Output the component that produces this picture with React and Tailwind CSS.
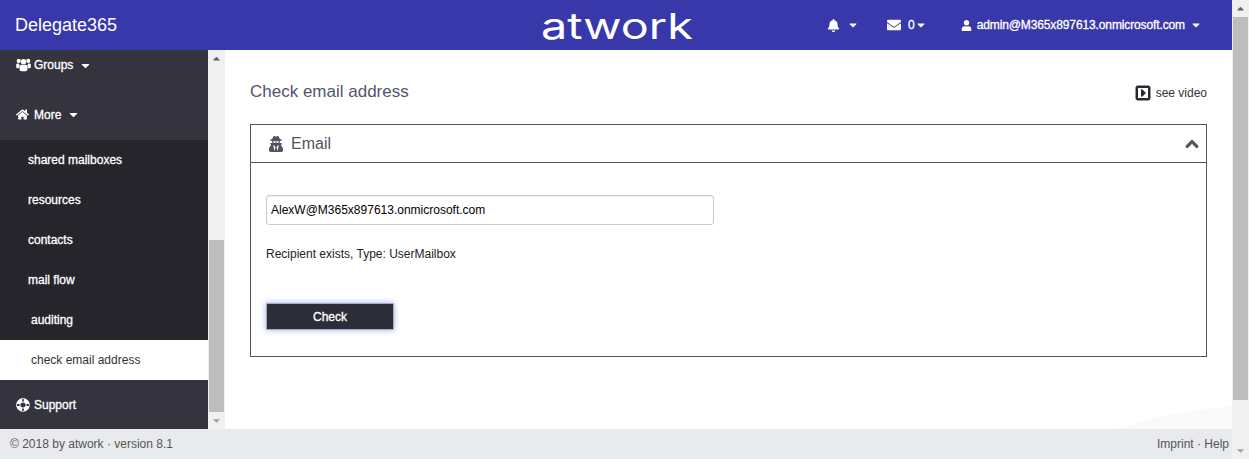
import React from 'react';
import {
  FaHome, FaLifeRing, FaBell, FaEnvelope, FaUser, FaCaretDown, FaCaretUp,
  FaChevronUp, FaUserSecret, FaRegCaretSquareRight,
} from 'react-icons/fa';

const FONT = "font-['Liberation_Sans',Arial,sans-serif]";
const SEMI = '[-webkit-text-stroke:0.3px_white]';

const SUB_ITEMS = [
  { label: 'shared mailboxes', pad: 'pl-7' },
  { label: 'resources', pad: 'pl-7' },
  { label: 'contacts', pad: 'pl-7' },
  { label: 'mail flow', pad: 'pl-7' },
  { label: 'auditing', pad: 'pl-[31px]' },
];

// three person icon, the package's own one is too thin at this size
function UsersIcon() {
  return (
    <svg viewBox="0 0 16 14" className="w-[15px] h-[14px] fill-white">
      <circle cx="8" cy="3.4" r="2.9" />
      <circle cx="2.9" cy="2.6" r="2.2" />
      <circle cx="13.1" cy="2.6" r="2.2" />
      <rect x="3.8" y="6.6" width="8.4" height="7" rx="2" />
      <rect x="0.2" y="5.4" width="3.4" height="5" rx="1.4" />
      <rect x="12.4" y="5.4" width="3.4" height="5" rx="1.4" />
    </svg>
  );
}

function Scrollbar({ thumbClass, thumbGrow }) {
  return (
    <div className="w-[17px] shrink-0 bg-[#f0f0f0] flex flex-col items-center">
      <div className="h-[17px] flex items-center justify-center text-[#606060] text-[11px]">
        <FaCaretUp />
      </div>
      <div className={`w-full flex-1 flex flex-col ${thumbClass}`}>
        <div className={`mx-[1px] bg-[#bdbdbd] ${thumbGrow}`} />
      </div>
      <div className="h-[17px] flex items-center justify-center text-[#a0a0a0] text-[11px]">
        <FaCaretDown />
      </div>
    </div>
  );
}

function NavHead({ icon, label, caret, className }) {
  return (
    <div className={`flex items-center pl-4 text-white text-xs ${SEMI} ${className}`}>
      <span className="w-[18px] text-[14px] flex">{icon}</span>
      <span>{label}</span>
      {caret && <FaCaretDown className="ml-[6px] text-[13px]" />}
    </div>
  );
}

export default function App() {
  return (
    <div className={`flex h-[459px] w-[1249px] overflow-hidden ${FONT}`}>
      <div className="flex-1 flex flex-col min-w-0">
        <header className="h-[50px] shrink-0 bg-[#3838ab] text-white flex items-center relative">
          <div className="pl-[15px] text-lg">Delegate365</div>
          <div className="absolute left-[541px] top-[4px] origin-left scale-x-[1.3] font-['Inter',sans-serif] font-normal text-[36px] leading-[44px]">atwork</div>
          <div className={`ml-auto flex items-center text-xs ${SEMI}`}>
            <FaBell className="text-[13px]" />
            <FaCaretDown className="ml-[7px] text-[12px]" />
            <FaEnvelope className="ml-[28px] text-[14px]" />
            <span className="ml-[7px]">0</span>
            <FaCaretDown className="text-[12px]" />
            <FaUser className="ml-[34px] text-[11px]" />
            <span className="ml-[5px] tracking-[-0.12px]">admin@M365x897613.onmicrosoft.com</span>
            <FaCaretDown className="ml-[5px] mr-[30px] text-[12px]" />
          </div>
        </header>

        <div className="flex-1 flex min-h-0">
          <aside className="w-[208px] shrink-0 bg-[#35343e] flex flex-col">
            <NavHead icon={<UsersIcon />} label="Groups" caret className="h-[30px]" />
            <NavHead icon={<FaHome className="text-[13px]" />} label="More" caret className="h-[60px] pt-[9px]" />
            <div className="bg-[#26252c]">
              {SUB_ITEMS.map(item => (
                <div key={item.label} className={`h-10 flex items-center text-white text-xs ${SEMI} ${item.pad}`}>
                  {item.label}
                </div>
              ))}
              <div className="h-10 flex items-center bg-white text-[#333] text-xs pl-[31px]">check email address</div>
            </div>
            <NavHead icon={<FaLifeRing className="rotate-45" />} label="Support" className="flex-1" />
          </aside>
          <Scrollbar thumbClass="justify-end" thumbGrow="h-[172px]" />

          <main className="flex-1 bg-white pl-[25px] pr-[25px] pt-[32px] relative overflow-hidden">
            {/* faint swoosh in the corner */}
            <div className="absolute top-[356px] right-[-228px] w-[400px] h-[154px] rounded-[50%] bg-[#fafafb]" />
            <div className="relative flex justify-between h-[42px]">
              <h1 className="text-[17px] leading-5 text-[#54536b]">Check email address</h1>
              <div className="flex items-center self-start mt-[3px] text-xs text-[#333]">
                <FaRegCaretSquareRight className="text-[16px] text-[#26252c] mr-[5px] stroke-current stroke-[30]" />
                see video
              </div>
            </div>
            <section className="relative border border-[#54535f] h-[233px]">
              <div className="h-[38px] border-b border-[#54535f] flex items-center pl-[17px] pr-[7px] text-[#54535f]">
                <FaUserSecret className="text-[16px]" />
                <span className="ml-[7px] text-base">Email</span>
                <FaChevronUp className="ml-auto text-[14px] stroke-current stroke-[40]" />
              </div>
              <div className="px-[15px] pt-8">
                <input
                  readOnly
                  value="AlexW@M365x897613.onmicrosoft.com"
                  className="block w-[448px] h-[30px] border border-[#ccc] rounded-[3px] px-1 text-xs text-black shadow-[inset_0_1px_1px_rgba(0,0,0,0.08)] outline-none"
                />
                <p className="mt-[21px] text-xs leading-4 text-[#222]">Recipient exists, Type: UserMailbox</p>
                <button className={`mt-[41px] block w-[128px] h-[27px] bg-[#2d2d37] border border-[#aab] text-white text-xs ${SEMI} shadow-[0_0_6px_rgba(80,110,230,0.55)]`}>
                  Check
                </button>
              </div>
            </section>
          </main>
        </div>

        <footer className="h-[30px] shrink-0 bg-[#e9eaee] flex items-center justify-between pl-[10px] pr-[3px] text-xs text-[#555]">
          <span>© 2018 by atwork · version 8.1</span>
          <span>Imprint · Help</span>
        </footer>
      </div>
      <Scrollbar thumbClass="" thumbGrow="h-[383px]" />
    </div>
  );
}
